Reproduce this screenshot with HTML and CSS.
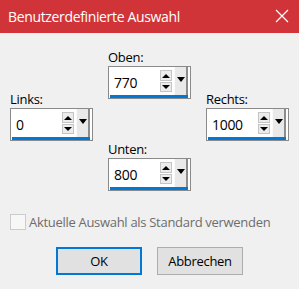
FILE: index.html
```html
<!DOCTYPE html>
<html>
<head>
  <meta charset="UTF-8">
  <title>Benutzerdefinierte Auswahl</title>
  <link rel="stylesheet" href="styles.css">
</head>
<body>
  <div class="dialog">
    <div class="title-bar">
      <span class="title-text">Benutzerdefinierte Auswahl</span>
      <svg class="close-icon" width="14" height="14" viewBox="0 0 14 14">
        <path d="M1 1 L13 13 M13 1 L1 13" stroke="#fff" stroke-width="1.2" fill="none"/>
      </svg>
    </div>

    <div class="fields">
      <div class="field-col side-col">
        <div class="field">
          <label class="field-label">Links:</label>
          <div class="spin">
            <div class="spin-inner">
              <span class="spin-value">0</span>
              <div class="spin-arrows">
                <span class="spin-btn up"></span>
                <span class="spin-btn down"></span>
              </div>
              <span class="spin-drop"></span>
            </div>
          </div>
        </div>
      </div>

      <div class="field-col middle-col">
        <div class="field">
          <label class="field-label">Oben:</label>
          <div class="spin">
            <div class="spin-inner">
              <span class="spin-value">770</span>
              <div class="spin-arrows">
                <span class="spin-btn up"></span>
                <span class="spin-btn down"></span>
              </div>
              <span class="spin-drop"></span>
            </div>
          </div>
        </div>
        <div class="field">
          <label class="field-label">Unten:</label>
          <div class="spin">
            <div class="spin-inner">
              <span class="spin-value">800</span>
              <div class="spin-arrows">
                <span class="spin-btn up"></span>
                <span class="spin-btn down"></span>
              </div>
              <span class="spin-drop"></span>
            </div>
          </div>
        </div>
      </div>

      <div class="field-col side-col">
        <div class="field">
          <label class="field-label">Rechts:</label>
          <div class="spin">
            <div class="spin-inner">
              <span class="spin-value">1000</span>
              <div class="spin-arrows">
                <span class="spin-btn up"></span>
                <span class="spin-btn down"></span>
              </div>
              <span class="spin-drop"></span>
            </div>
          </div>
        </div>
      </div>
    </div>

    <div class="checkbox-row">
      <span class="checkbox"></span>
      <span class="checkbox-label">Aktuelle Auswahl als Standard verwenden</span>
    </div>

    <div class="buttons-row">
      <button class="dialog-button default-button">OK</button>
      <button class="dialog-button">Abbrechen</button>
    </div>
  </div>
</body>
</html>
```

FILE: styles.css
```css
body {
  margin: 0;
  background-color: #f0f0f0;
  font-family: "Open Sans", "Noto Sans", sans-serif;
  font-size: 13px;
  letter-spacing: -0.3px;
  color: #000;
}
.dialog {
  width: 299px;
  height: 289px;
  overflow: hidden;
}
.title-bar {
  height: 33px;
  background-color: #d13438;
  display: flex;
  align-items: center;
  justify-content: space-between;
  padding: 0 10px 0 8px;
  box-sizing: border-box;
}
.title-text {
  color: #fff;
  font-size: 14px;
  letter-spacing: -0.35px;
  margin-top: -1px;
}
.close-icon {
  margin-top: -1px;
}
.fields {
  display: grid;
  grid-template-columns: 83px 83px 83px;
  column-gap: 15px;
  padding: 15px 0 0 10px;
  height: 145px;
  box-sizing: border-box;
}
.field-col {
  display: flex;
  flex-direction: column;
}
.side-col {
  justify-content: center;
  padding-bottom: 8px;
}
.middle-col {
  gap: 41px;
}
.field-label {
  display: block;
  line-height: 18px;
  height: 18px;
  white-space: nowrap;
}
.spin {
  height: 33px;
  box-sizing: border-box;
  border: 1px solid #8a8a8a;
  background-color: #fff;
  padding: 0 2px 0 1px;
}
.spin-inner {
  display: flex;
  height: 100%;
  box-sizing: border-box;
  border-bottom: 3px solid #0078d7;
}
.spin-value {
  flex: 1;
  padding: 7px 0 0 4px;
  line-height: 18px;
  font-size: 14px;
}
.spin-arrows {
  display: flex;
  flex-direction: column;
  gap: 1px;
  padding-top: 3px;
  margin-right: 2px;
}
.spin-btn {
  width: 12px;
  height: 11px;
  box-sizing: border-box;
  border: 1px solid #c4c4c4;
  background-color: #ececec;
  display: flex;
  align-items: center;
  justify-content: center;
}
.spin-btn.down {
  height: 10px;
}
.spin-btn.up::after {
  content: "";
  border-left: 4px solid transparent;
  border-right: 4px solid transparent;
  border-bottom: 4px solid #000;
}
.spin-btn.down::after {
  content: "";
  border-left: 4px solid transparent;
  border-right: 4px solid transparent;
  border-top: 4px solid #000;
}
.spin-drop {
  width: 14px;
  box-sizing: border-box;
  background-color: #e9e9e9;
  border-right: 2px solid #8c8c8c;
  border-left: 1px solid #fafafa;
  display: flex;
  justify-content: center;
  padding-top: 10px;
}
.spin-drop::after {
  content: "";
  width: 0;
  height: 0;
  border-left: 4.5px solid transparent;
  border-right: 4.5px solid transparent;
  border-top: 5px solid #000;
}
.checkbox-row {
  display: flex;
  align-items: center;
  gap: 3px;
  padding: 36px 0 0 10px;
}
.checkbox {
  width: 16px;
  height: 16px;
  box-sizing: border-box;
  border: 1px solid #cccccc;
  background-color: #f7f7f7;
}
.checkbox-label {
  color: #6d6d6d;
  line-height: 16px;
  white-space: nowrap;
}
.buttons-row {
  display: flex;
  justify-content: center;
  gap: 15px;
  padding-top: 17px;
}
.dialog-button {
  width: 86px;
  height: 28px;
  box-sizing: border-box;
  background-color: #e1e1e1;
  border: 1px solid #adadad;
  font-family: inherit;
  font-size: 13px;
  letter-spacing: inherit;
  color: #000;
  padding: 0;
}
.default-button {
  border: 2px solid #0078d7;
}
```
